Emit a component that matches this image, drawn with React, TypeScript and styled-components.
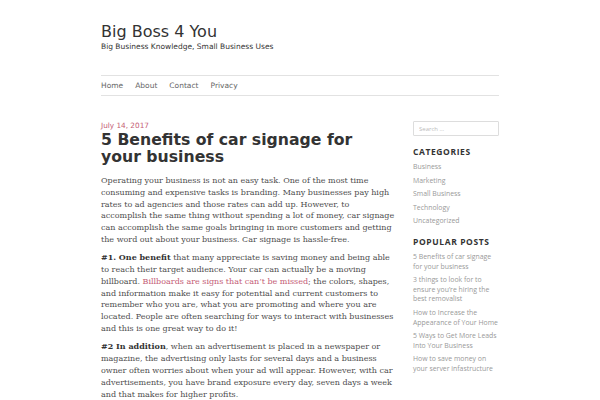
import styled, { createGlobalStyle } from 'styled-components';

const GlobalStyle = createGlobalStyle`
  html, body {
    margin: 0;
    padding: 0;
    background: #fff;
  }
`;

const categories = ['Business', 'Marketing', 'Small Business', 'Technology', 'Uncategorized'];

const popularPosts = [
  '5 Benefits of car signage for your business',
  '3 things to look for to ensure you\u2019re hiring the best removalist',
  'How to Increase the Appearance of Your Home',
  '5 Ways to Get More Leads Into Your Business',
  'How to save money on your server infastructure',
];

const navItems = ['Home', 'About', 'Contact', 'Privacy'];

const App = () => {
  return (
    <>
      <GlobalStyle />
      <Page>
        <Header>
          <SiteTitle>Big Boss 4 You</SiteTitle>
          <Tagline>Big Business Knowledge, Small Business Uses</Tagline>
        </Header>
        <Nav>
          {navItems.map((item) => (
            <NavLink key={item}>{item}</NavLink>
          ))}
        </Nav>
        <Columns>
          <Article>
            <PostDate>July 14, 2017</PostDate>
            <PostTitle>5 Benefits of car signage for your business</PostTitle>
            <Paragraph>
              Operating your business is not an easy task. One of the most time consuming and
              expensive tasks is branding. Many businesses pay high rates to ad agencies and those
              rates can add up. However, to accomplish the same thing without spending a lot of
              money, car signage can accomplish the same goals bringing in more customers and
              getting the word out about your business. Car signage is hassle-free.
            </Paragraph>
            <Paragraph>
              <strong>#1. One benefit</strong> that many appreciate is saving money and being able
              to reach their target audience. Your car can actually be a moving billboard.{' '}
              <TextLink>Billboards are signs that can&rsquo;t be missed</TextLink>; the colors,
              shapes, and information make it easy for potential and current customers to remember
              who you are, what you are promoting and where you are located. People are often
              searching for ways to interact with businesses and this is one great way to do it!
            </Paragraph>
            <Paragraph>
              <strong>#2 In addition</strong>, when an advertisement is placed in a newspaper or
              magazine, the advertising only lasts for several days and a business owner often
              worries about when your ad will appear. However, with car advertisements, you have
              brand exposure every day, seven days a week and that makes for higher profits.
            </Paragraph>
          </Article>
          <Sidebar>
            <SearchInput placeholder="Search &hellip;" />
            <WidgetTitle>Categories</WidgetTitle>
            <WidgetList>
              {categories.map((c) => (
                <WidgetItem key={c} $spacing={4}>
                  {c}
                </WidgetItem>
              ))}
            </WidgetList>
            <WidgetTitle>Popular Posts</WidgetTitle>
            <WidgetList>
              {popularPosts.map((p) => (
                <WidgetItem key={p} $spacing={4}>
                  {p}
                </WidgetItem>
              ))}
            </WidgetList>
          </Sidebar>
        </Columns>
      </Page>
    </>
  );
};

const Page = styled.div`
  width: 398px;
  margin: 0 auto;
  padding-top: 22px;
`;

const Header = styled.header`
  display: flex;
  flex-direction: column;
  height: 53px;
`;

const SiteTitle = styled.h1`
  margin: 0;
  font-family: 'DejaVu Sans', sans-serif;
  font-size: 16px;
  font-weight: normal;
  line-height: 20px;
  color: #333;
`;

const Tagline = styled.p`
  margin: 0;
  font-family: 'DejaVu Sans', sans-serif;
  font-size: 7.5px;
  line-height: 9px;
  color: #333;
`;

const Nav = styled.nav`
  display: flex;
  gap: 12px;
  align-items: center;
  height: 19px;
  border-top: 1px solid #e2e2e2;
  border-bottom: 1px solid #e2e2e2;
`;

const NavLink = styled.a`
  font-family: 'DejaVu Sans', sans-serif;
  font-size: 7.5px;
  color: #666;
  cursor: pointer;
`;

const Columns = styled.div`
  display: flex;
  justify-content: space-between;
  padding-top: 25px;
`;

const Article = styled.article`
  width: 295px;
`;

const PostDate = styled.div`
  font-family: 'DejaVu Sans', sans-serif;
  font-size: 7.3px;
  line-height: 10px;
  color: #c45c75;
`;

const PostTitle = styled.h2`
  margin: 0 0 10px;
  padding-right: 15px;
  font-family: 'DejaVu Sans', sans-serif;
  font-size: 15.7px;
  font-weight: bold;
  line-height: 17px;
  color: #333;
`;

const Paragraph = styled.p`
  margin: 0 0 6.5px;
  font-family: 'DejaVu Serif', serif;
  font-size: 8px;
  line-height: 11.8px;
  color: #4d4d4d;

  strong {
    color: #333;
  }
`;

const TextLink = styled.a`
  color: #c45c75;
  cursor: pointer;
`;

const Sidebar = styled.aside`
  width: 86px;
  display: flex;
  flex-direction: column;
`;

const SearchInput = styled.input`
  box-sizing: border-box;
  width: 100%;
  height: 15px;
  padding: 0 5px;
  border: 1px solid #ddd;
  border-radius: 1px;
  font-family: 'Open Sans', sans-serif;
  font-size: 6px;
  color: #999;
  outline: none;

  &::placeholder {
    color: #bbb;
  }
`;

const WidgetTitle = styled.h3`
  margin: 11px 0 5px;
  font-family: 'Open Sans', sans-serif;
  font-size: 8.5px;
  font-weight: bold;
  letter-spacing: 0.6px;
  text-transform: uppercase;
  line-height: 10px;
  color: #333;
`;

const WidgetList = styled.ul`
  display: flex;
  flex-direction: column;
  width: 85.5px;
  margin: 0;
  padding: 0;
  list-style: none;
`;

const WidgetItem = styled.li<{ $spacing: number }>`
  margin-bottom: ${(p) => p.$spacing}px;
  font-family: 'Open Sans', sans-serif;
  font-size: 6.9px;
  line-height: 9.6px;
  color: #999;

  &:last-child {
    margin-bottom: 0;
  }
`;

export default App;
